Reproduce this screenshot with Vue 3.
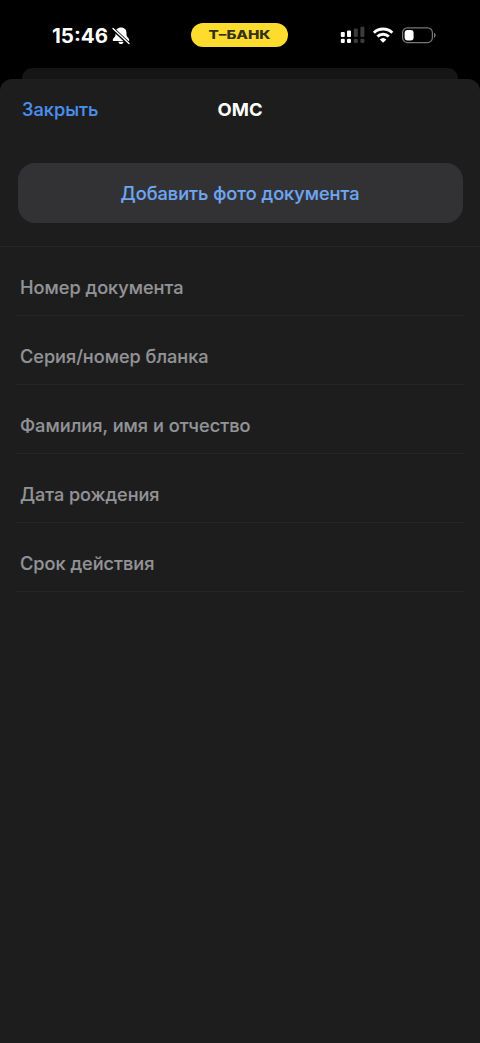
<script setup>
const fields = [
  { label: 'Номер документа', width: 163.5 },
  { label: 'Серия/номер бланка', width: 188.5 },
  { label: 'Фамилия, имя и отчество', width: 230.5 },
  { label: 'Дата рождения', width: 139.5 },
  { label: 'Срок действия', width: 134.5 },
]
</script>

<template>
  <div class="screen">
    <header class="status">
      <div class="clock">
        <svg class="time" width="59" height="25"><text x="0" y="20" textLength="56" lengthAdjust="spacingAndGlyphs">15:46</text></svg>
        <svg class="bell" width="20" height="20" viewBox="0 0 20 20">
          <path d="M10 1.500C6.600 1.500 4.500 3.800 4.500 6.800v2.400c0 1.700-2.800 3-2.800 4.700 0 .7.400 1 1 1h14.600c.6 0 1-.3 1-1 0-1.700-2.800-3-2.800-4.700V6.800C15.500 3.800 13.400 1.500 10 1.500ZM7.400 15.700h5.200C12.400 17.100 11.400 18 10 18S7.600 17.100 7.400 15.700Z" fill="#fff" />
          <path d="M1.800 2.800 17.800 17.800" stroke="#000" stroke-width="3.600" />
          <path d="M2 2.400 18 17.400" stroke="#fff" stroke-width="1.400" stroke-linecap="round" />
        </svg>
      </div>
      <div class="pill">
        <svg width="97" height="24" viewBox="0 0 97 24">
          <text class="brand" x="17.500" y="16.200" textLength="62" lengthAdjust="spacingAndGlyphs">Т–БАНК</text>
        </svg>
      </div>
      <svg class="indicators" width="100" height="20" viewBox="0 0 100 20">
        <g fill="#fff">
          <rect x="0.800" y="7" width="4" height="5" rx="1" />
          <rect x="7" y="5.500" width="4" height="6.500" rx="1" />
          <rect x="0.800" y="13.800" width="4" height="4.300" rx="1.300" />
          <rect x="7" y="13.800" width="4" height="4.300" rx="1.300" />
        </g>
        <g fill="#3b3b3b">
          <rect x="13.800" y="3.500" width="4" height="8.500" rx="1" />
          <rect x="20.400" y="1.800" width="4" height="10.200" rx="1" />
          <rect x="13.800" y="13.800" width="4" height="4.300" rx="1.300" />
          <rect x="20.400" y="13.800" width="4" height="4.300" rx="1.300" />
        </g>
        <g fill="none" stroke="#fff" stroke-width="2.900">
          <path d="M33.900 7.700a13.200 13.200 0 0 1 18.400 0" />
          <path d="M37.400 11.500a8.300 8.300 0 0 1 11.400 0" />
        </g>
        <path d="M39.800 14.500a4.800 4.800 0 0 1 6.600 0L43.100 17.800Z" fill="#fff" />
        <rect x="62.600" y="2.800" width="29.800" height="14.800" rx="4.800" fill="none" stroke="#777" stroke-width="1.200" />
        <rect x="64.600" y="4.900" width="9" height="10.600" rx="3" fill="#fff" />
        <path d="M94 7.800c2.200.6 2.200 4.200 0 4.800Z" fill="#777" />
      </svg>
    </header>

    <div class="behind"></div>

    <main class="sheet">
      <nav class="bar">
        <svg class="close" width="90" height="30"><text x="0" y="21" textLength="76.500" lengthAdjust="spacingAndGlyphs">Закрыть</text></svg>
        <svg class="title" width="60" height="30"><text x="7.600" y="21" textLength="45" lengthAdjust="spacingAndGlyphs">ОМС</text></svg>
      </nav>
      <button class="add">
        <svg width="250" height="30"><text x="5.500" y="21" textLength="239" lengthAdjust="spacingAndGlyphs">Добавить фото документа</text></svg>
      </button>
      <section class="fields">
        <div v-for="f in fields" :key="f.label" class="field">
          <svg width="260" height="30"><text x="0" y="21" :textLength="f.width" lengthAdjust="spacingAndGlyphs">{{ f.label }}</text></svg>
        </div>
      </section>
    </main>
  </div>
</template>

<style>
html, body { background: #000; }
body { margin: 0; }
</style>

<style scoped>
.screen {
  width: 480px;
  height: 1043px;
  display: flex;
  flex-direction: column;
  overflow: hidden;
  background: #000;
  font-family: Inter, "Liberation Sans", sans-serif;
}
svg { display: block; flex: none; }
.status {
  height: 68px;
  flex: none;
  display: grid;
  grid-template-columns: 191.300px 97.200px 1fr;
  align-items: start;
}
.clock {
  display: flex;
  align-items: center;
  padding: 23px 0 0 52px;
  height: 25px;
}
.time { font-size: 20px; font-weight: 700; fill: #fff; }
.pill {
  margin-top: 23px;
  height: 24px;
  border-radius: 12px;
  background: #fddc2e;
}
.brand { font-size: 12.3px; font-weight: 800; fill: #35321c; }
.indicators { margin: 25px 0 0 51.500px; }
.behind {
  flex: none;
  height: 11px;
  margin: 0 22px;
  border-radius: 10px 10px 0 0;
  background: #151516;
}
.sheet {
  flex: 1;
  background: #1d1d1e;
  border-radius: 12px 12px 0 0;
}
.bar {
  height: 84px;
  display: grid;
  grid-template-columns: 188px 60px;
  padding: 16px 0 0 22px;
  box-sizing: border-box;
}
.close,
.add,
.field {
  font-size: 18px;
  font-weight: 500;
  stroke-width: 0.15px;
}
.close { fill: #4b8feb; stroke: #4b8feb; }
.title { font-size: 18px; font-weight: 700; fill: #fff; }
.add {
  display: flex;
  align-items: center;
  justify-content: center;
  width: 445px;
  height: 60px;
  margin: 0 17.600px 23px;
  padding: 1px 0 0;
  box-sizing: border-box;
  border: 0;
  border-radius: 17px;
  background: #323234;
  font-family: inherit;
  fill: #6fa6f0;
  stroke: #6fa6f0;
}
.fields { border-top: 1px solid #262627; }
.field {
  height: 69.1px;
  box-sizing: border-box;
  margin: 0 16px;
  padding: 26px 0 0 4px;
  border-bottom: 1px solid #252526;
  fill: #929396;
  stroke: #929396;
}
</style>
